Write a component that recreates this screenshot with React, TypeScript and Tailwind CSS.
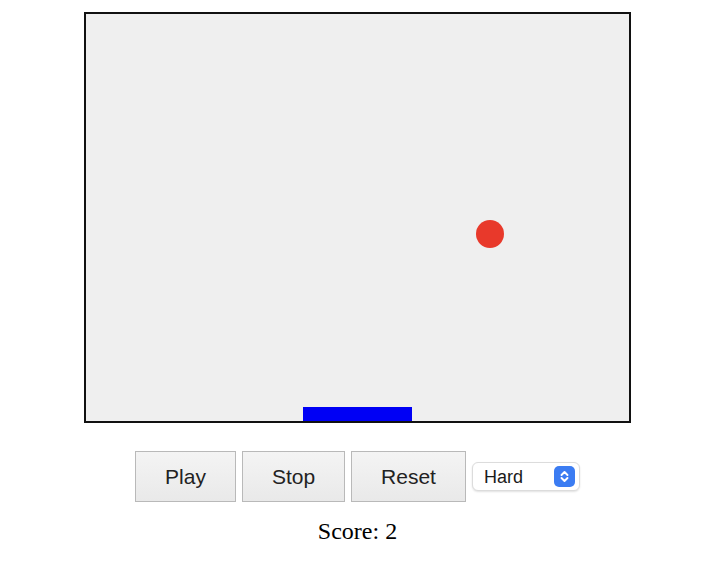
import * as React from "react";

const sans = { fontFamily: '"Liberation Sans", Arial, sans-serif' };

function GameButton({ label }: { label: string }) {
	return (
		<button
			type="button"
			className="h-[51px] px-[29px] border border-[#b9b9b9] bg-gradient-to-b from-[#f4f4f4] to-[#e9e9e9] text-[21px] text-[#222] leading-none"
			style={sans}
		>
			{label}
		</button>
	);
}

function LevelSelect() {
	return (
		<div
			className="flex items-center justify-between w-[108px] h-[29px] pl-[11px] pr-[4px] bg-white border border-[#dcdcdc] rounded-[6px] shadow-[0_1px_2px_rgba(0,0,0,0.12)]"
			style={sans}
		>
			<span className="text-[18px] text-[#1a1a1a] leading-none">Hard</span>
			<span className="flex items-center justify-center w-[21px] h-[21px] rounded-[5px] bg-[#3b7cf2]">
				<svg width="11" height="15" viewBox="0 0 11 15" fill="none">
					<path
						d="M2.5 6 L5.5 3 L8.5 6 M2.5 9 L5.5 12 L8.5 9"
						stroke="white"
						strokeWidth="1.9"
						strokeLinecap="round"
						strokeLinejoin="round"
					/>
				</svg>
			</span>
		</div>
	);
}

export default function App() {
	return (
		<div className="w-[715px] min-h-[573px] bg-white flex flex-col items-center">
			{/* playfield */}
			<div className="relative mt-[12px] w-[547px] h-[411px] border-[2.5px] border-[#111] bg-[#efefef]">
				<div className="absolute left-[390px] top-[206px] w-[28px] h-[28px] rounded-full bg-[#e8392b]" />
				<div className="absolute left-[217px] bottom-0 w-[109px] h-[14px] bg-[#0000f5]" />
			</div>

			<div className="mt-[28px] flex items-center gap-[6px]">
				<GameButton label="Play" />
				<GameButton label="Stop" />
				<GameButton label="Reset" />
				<LevelSelect />
			</div>

			<div
				className="mt-[15px] text-[24px] leading-[28px] text-black"
				style={{ fontFamily: '"Liberation Serif", "Times New Roman", serif' }}
			>
				Score: 2
			</div>
		</div>
	);
}
